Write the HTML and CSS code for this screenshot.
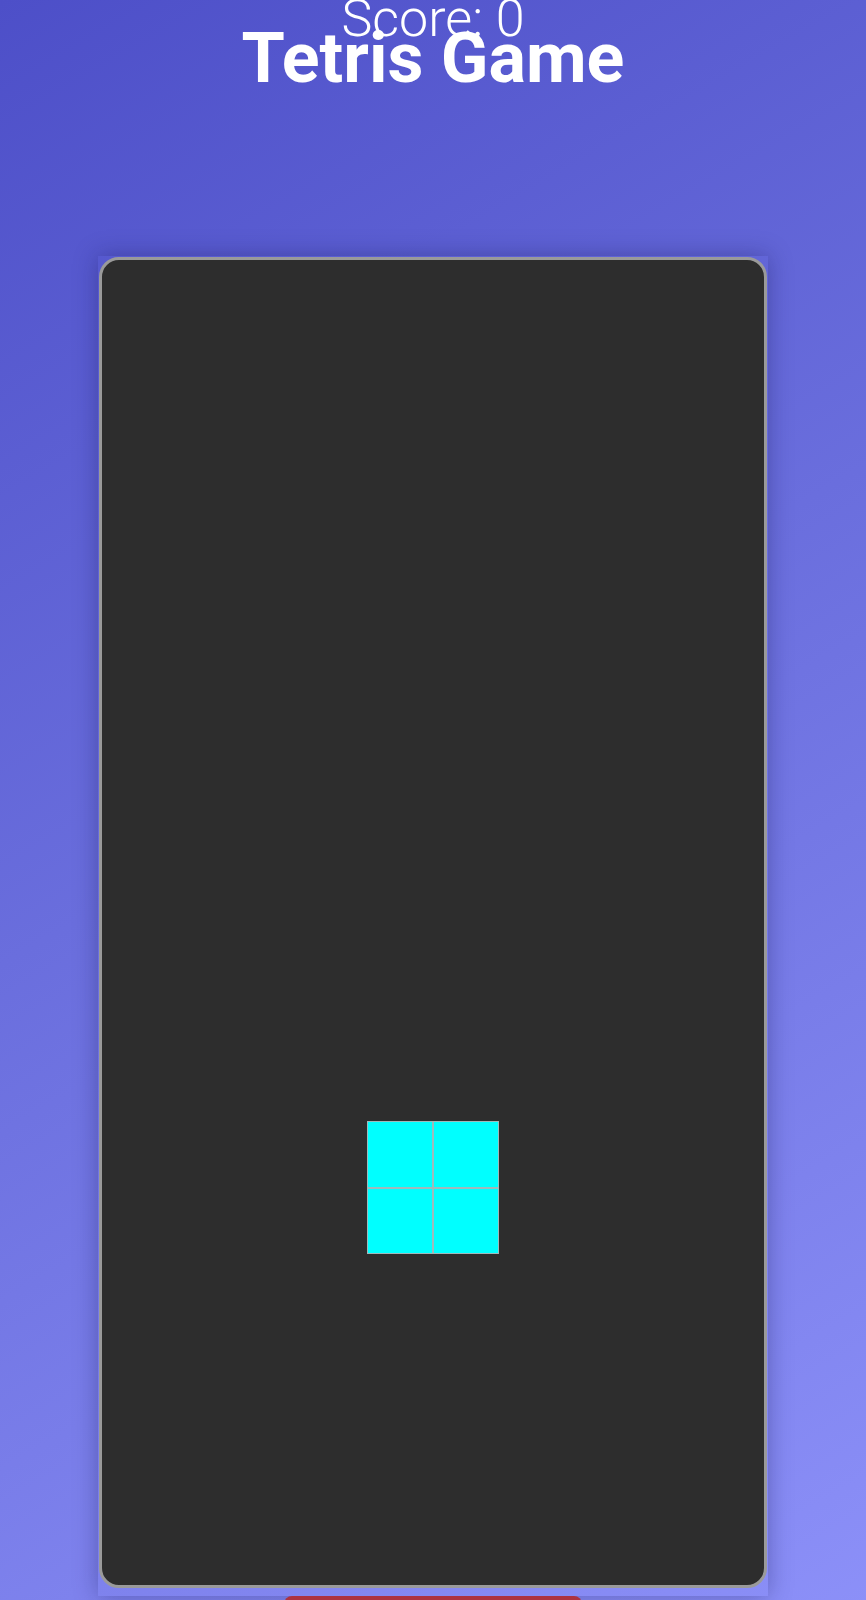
FILE: index.html
```html
<!DOCTYPE html>
<html lang="en">
<head>
<meta charset="utf-8">
<title>Tetris Game</title>
<link rel="stylesheet" href="styles.css">
</head>
<body>
<main class="app">
  <div class="score">Score: 0</div>
  <h1 class="title">Tetris Game</h1>
  <div class="game">
    <div class="board">
      <div class="cell c5 r14"></div>
      <div class="cell c6 r14"></div>
      <div class="cell c5 r15"></div>
      <div class="cell c6 r15"></div>
    </div>
  </div>
  <button class="btn">Start</button>
</main>
</body>
</html>
```
FILE: styles.css
```css
html, body {
  margin: 0;
  padding: 0;
}
body {
  min-height: 1600px;
  overflow: hidden;
  background: linear-gradient(150deg, #4d4fc8 0%, #6a6edd 45%, #8d91f9 100%);
  font-family: Roboto, "Liberation Sans", sans-serif;
  color: #fff;
}
.app {
  display: flex;
  flex-direction: column;
  align-items: center;
}
.score {
  font-size: 52px;
  font-weight: 300;
  line-height: 38px;
  height: 38px;
}
.title {
  margin: -15px 0 0;
  font-size: 70px;
  font-weight: 700;
  line-height: 70px;
}
.game {
  margin-top: 163px;
  width: 668px;
  padding: 1px 1px 8px;
  box-shadow: 0 0 22px rgba(20, 20, 80, 0.35);
}
.board {
  box-sizing: border-box;
  width: 668px;
  height: 1331px;
  border: 3px solid #9a9a9a;
  border-radius: 20px;
  background: #2d2d2d;
  display: grid;
  grid-template-columns: repeat(10, 1fr);
  grid-template-rows: repeat(20, 1fr);
}
.cell {
  background: #00ffff;
  box-shadow: inset 0 0 0 1px #9fb9bb;
}
.c5 { grid-column: 5; }
.c6 { grid-column: 6; }
.r14 { grid-row: 14; }
.r15 { grid-row: 15; }
.btn {
  margin-top: 0;
  width: 298px;
  height: 50px;
  border: none;
  border-radius: 8px;
  background: #ad3340;
  color: #fff;
  font-family: Roboto, "Liberation Sans", sans-serif;
  font-size: 20px;
}
```
